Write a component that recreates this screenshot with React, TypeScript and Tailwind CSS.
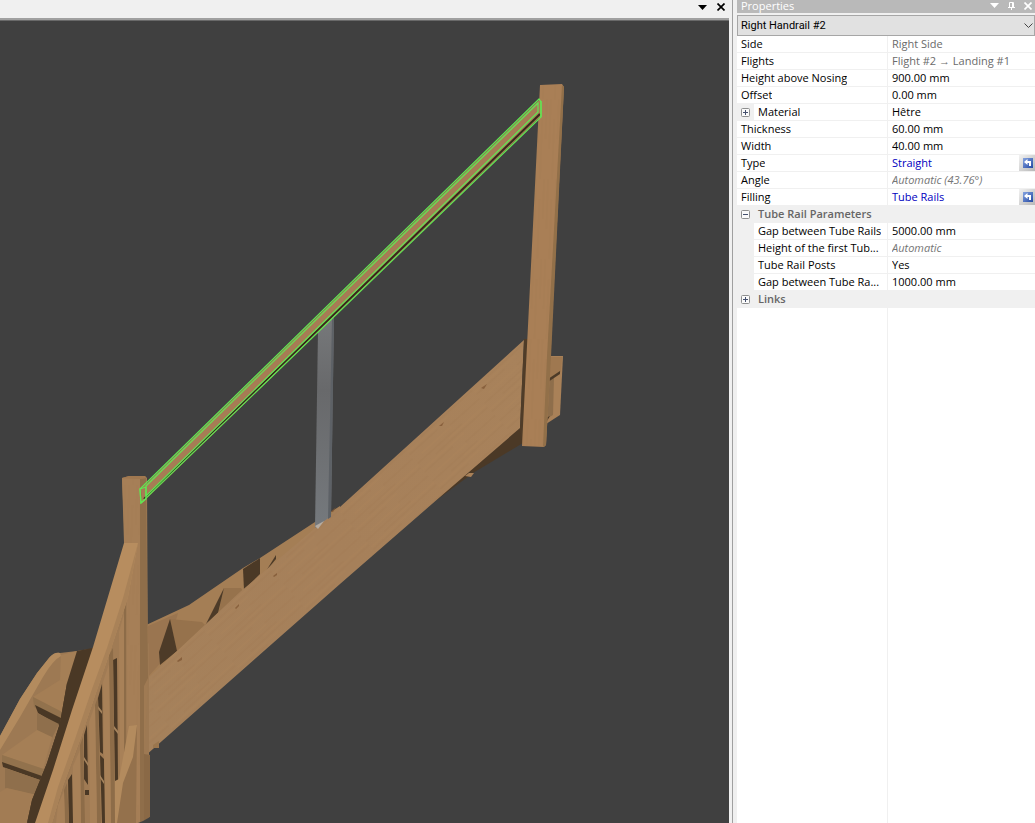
import React, { useState } from 'react';

type Kind = 'input' | 'readonly' | 'auto' | 'link';

interface Property {
  id: string;
  label: string;
  value: string;
  kind: Kind;
  expandable?: boolean;
}

const PROPERTIES: Property[] = [
  { id: 'side', label: 'Side', value: 'Right Side', kind: 'readonly' },
  { id: 'flights', label: 'Flights', value: 'Flight #2 → Landing #1', kind: 'readonly' },
  { id: 'height', label: 'Height above Nosing', value: '900.00 mm', kind: 'input' },
  { id: 'offset', label: 'Offset', value: '0.00 mm', kind: 'input' },
  { id: 'material', label: 'Material', value: 'Hêtre', kind: 'input', expandable: true },
  { id: 'thickness', label: 'Thickness', value: '60.00 mm', kind: 'input' },
  { id: 'width', label: 'Width', value: '40.00 mm', kind: 'input' },
  { id: 'type', label: 'Type', value: 'Straight', kind: 'link' },
  { id: 'angle', label: 'Angle', value: 'Automatic (43.76°)', kind: 'auto' },
  { id: 'filling', label: 'Filling', value: 'Tube Rails', kind: 'link' },
];

const TUBE_PROPERTIES: Property[] = [
  { id: 'tube-gap', label: 'Gap between Tube Rails', value: '5000.00 mm', kind: 'input' },
  { id: 'tube-height', label: 'Height of the first Tub...', value: 'Automatic', kind: 'auto' },
  { id: 'tube-posts', label: 'Tube Rail Posts', value: 'Yes', kind: 'input' },
  { id: 'tube-post-gap', label: 'Gap between Tube Ra...', value: '1000.00 mm', kind: 'input' },
];

const VALUE_STYLES: Record<Kind, string> = {
  input: 'text-black',
  readonly: 'text-[#6a6a6a]',
  auto: 'text-[#757575] italic',
  link: 'text-[#0000c0]',
};

const DownArrow = () => (
  <svg width="9" height="5" viewBox="0 0 9 5" fill="currentColor" aria-hidden="true">
    <path d="M0 0h9L4.500 5z" />
  </svg>
);

const CloseIcon = () => (
  <svg width="8" height="8" viewBox="0 0 8 8" stroke="currentColor" strokeWidth="1.700" aria-hidden="true">
    <path d="M.5.5l7 7M7.500.5l-7 7" />
  </svg>
);

const PinIcon = () => (
  <svg width="7" height="8" viewBox="0 0 7 8" fill="none" stroke="currentColor" aria-hidden="true">
    <path d="M1.500 5V.5h4V5M4.500.5V5M0 5.500h7M3.500 5.500V8" />
  </svg>
);

const ResetIcon = () => (
  <svg width="10" height="10" viewBox="0 0 10 10" aria-hidden="true">
    <defs>
      <linearGradient id="resetFill" x1="0" y1="0" x2="1" y2="1">
        <stop offset="0" stopColor="#86a4e0" />
        <stop offset="1" stopColor="#2449a4" />
      </linearGradient>
    </defs>
    <rect width="10" height="10" fill="url(#resetFill)" />
    <path d="M1 4l3.500-3v2H8v5H6V5H4.500v2z" fill="#fff" />
  </svg>
);

const Expander = ({ open, name, onClick }: { open: boolean; name: string; onClick?: () => void }) => (
  <button
    type="button"
    aria-label={`Toggle ${name}`}
    aria-expanded={open}
    onClick={onClick}
    className="flex items-center justify-center w-[17px] h-4 shrink-0 bg-[#f0f0f0]"
  >
    <svg width="9" height="9" viewBox="0 0 9 9" fill="#fafafa" stroke="#8e8f8f" aria-hidden="true">
      <rect x=".5" y=".5" width="8" height="8" rx="1" />
      <path d={open ? 'M2 4.500h5' : 'M2 4.500h5M4.500 2v5'} stroke="#44506e" />
    </svg>
  </button>
);

const PropertyRow = ({ item, nested }: { item: Property; nested?: boolean }) => {
  const style = VALUE_STYLES[item.kind];
  return (
    <div className="flex h-[17px]">
      {nested && <div className="w-[17px] shrink-0 bg-[#f0f0f0]" />}
      <div className="flex flex-1 min-w-0 border-b border-[#f0f0f0]">
        <div className={`flex shrink-0 border-r border-[#f0f0f0] ${nested ? 'w-[134px]' : 'w-[151px]'}`}>
          {item.expandable && <Expander open={false} name={item.label} />}
          <label htmlFor={item.id} className="pl-1 whitespace-nowrap overflow-hidden leading-4">
            {item.label}
          </label>
        </div>
        {item.kind === 'link' ? (
          <>
            <button id={item.id} type="button" className={`flex-1 pl-1 text-left leading-4 ${style}`}>
              {item.value}
            </button>
            <button
              type="button"
              aria-label={`Reset ${item.label}`}
              className="flex items-center justify-center w-4 h-4 pl-0.5 bg-linear-to-br from-[#f2f2f2] to-[#b8b8b8]"
            >
              <ResetIcon />
            </button>
          </>
        ) : (
          <input
            id={item.id}
            type="text"
            defaultValue={item.value}
            readOnly={item.kind === 'readonly'}
            className={`flex-1 min-w-0 h-4 pl-1 leading-4 bg-transparent outline-none ${style}`}
          />
        )}
      </div>
    </div>
  );
};

const GroupRow = ({ label, open, onClick }: { label: string; open: boolean; onClick: () => void }) => (
  <div className="flex items-start h-[17px] bg-[#f0f0f0] text-[#666666] font-semibold">
    <Expander open={open} name={label} onClick={onClick} />
    <h3 className="pl-1 leading-4">{label}</h3>
  </div>
);

const PropertiesPanel = () => {
  const [tubeOpen, setTubeOpen] = useState(true);
  const [linksOpen, setLinksOpen] = useState(false);

  return (
    <aside className="flex flex-col w-[298px] shrink-0 text-[11px] bg-white">
      <header className="flex items-start justify-between h-[13px] pl-1 bg-[#b9b9b9] text-white">
        <h2 className="leading-3">Properties</h2>
        <div className="flex items-center gap-[9px] h-[11px] pr-[3px]">
          <button type="button" aria-label="Panel menu"><DownArrow /></button>
          <button type="button" aria-label="Pin panel"><PinIcon /></button>
          <button type="button" aria-label="Close panel"><CloseIcon /></button>
        </div>
      </header>
      <div className="relative pt-0.5 bg-[#f0f0f0]">
        <select
          aria-label="Selected element"
          className="block w-full h-[21px] pl-[3px] pt-0.5 appearance-none border border-[#a6a6a6] bg-[#e1e1e1] text-[11px] font-['Roboto','Liberation_Sans',sans-serif] text-black"
        >
          <option>Right Handrail #2</option>
        </select>
        <svg className="absolute right-0.5 top-2.5 pointer-events-none" width="9" height="6" viewBox="0 0 9 6" fill="none" stroke="#444" aria-hidden="true">
          <path d="M.5.5l4 4 4-4" />
        </svg>
      </div>

      <div>
        {PROPERTIES.map(item => (
          <PropertyRow key={item.id} item={item} />
        ))}
        <GroupRow label="Tube Rail Parameters" open={tubeOpen} onClick={() => setTubeOpen(!tubeOpen)} />
        {tubeOpen && TUBE_PROPERTIES.map(item => <PropertyRow key={item.id} item={item} nested />)}
        <GroupRow label="Links" open={linksOpen} onClick={() => setLinksOpen(!linksOpen)} />
      </div>
      <div className="flex-1 w-[151px] border-r border-[#f0f0f0]" />
    </aside>
  );
};

const StairModel = () => (
  <svg
    className="block w-full h-full"
    viewBox="0 21 729 802"
    preserveAspectRatio="xMinYMin slice"
    role="img"
    aria-label="Staircase model"
  >
    <defs>
      <pattern id="grainSlope" width="90" height="23" patternUnits="userSpaceOnUse" patternTransform="rotate(-42)">
        <path d="M0 3h60M20 8h70M0 14h38M50 19h40" stroke="#8c623a" strokeOpacity=".1" />
        <path d="M40 5h50M0 11h55M10 21h40" stroke="#c39768" strokeOpacity=".12" />
      </pattern>
      <pattern id="grainPost" width="12" height="80" patternUnits="userSpaceOnUse" patternTransform="rotate(2)">
        <path d="M2 0v50M6 20v60M10 0v40" stroke="#8c623a" strokeOpacity=".1" />
      </pattern>
      <linearGradient id="beam" x1="0" y1="1" x2="1" y2="0">
        <stop offset="0" stopColor="#a5815b" />
        <stop offset=".5" stopColor="#a6805a" />
        <stop offset="1" stopColor="#a8825b" />
      </linearGradient>
      <linearGradient id="tube" x1="0" y1="0" x2="0" y2="1">
        <stop offset="0" stopColor="#77797b" />
        <stop offset=".35" stopColor="#68696b" />
        <stop offset="1" stopColor="#75797d" />
      </linearGradient>
    </defs>

    {/* landing edge behind the top post */}
    <path d="M549 356h14l-3 59-14 9z" fill="#a98158" />
    <path d="M550 357h12l-1 15-12 8z" fill="#9f7850" />
    <path d="M549 381l5-4-1 38-7 4z" fill="#8e6e4b" />
    <path d="M548 379l12-8v3l-12 8z" fill="#4d3b28" />
    <path d="M546 418l4-2-3 5z" fill="#4d3b28" />

    {/* far stringer and treads of the upper flight */}
    <path d="M144 626l45-21 54-37 17-10 55-36 25-16v60L146 720z" fill="#a47e55" />
    <path d="M148 626l30-13-13 45-18 20z" fill="#9a7550" />
    <path d="M170 619l32 3 5 5-30 26z" fill="#96724c" />
    <path d="M170 619l7 32-17 14-1-13z" fill="#4d3b28" />
    <path d="M224 588h17l3 5-26 22z" fill="#96724c" />
    <path d="M224 588l-6 25-13 13z" fill="#4d3b28" />
    <path d="M243 569l17-11v16l-16 16z" fill="#4b3926" />
    <path d="M276 555v4l-10 12z" fill="#4d3b28" />

    {/* near stringer */}
    <path d="M434 502l39-29 50-30v-20z" fill="#4b3926" />
    <path d="M465 476l4-3h5l-3 4z" fill="#a98158" />
    <path d="M144 682l33-31 63-59 100-85 184-167-4 88-80 69-100 87-195 172z" fill="url(#beam)" />
    <path d="M144 682l33-31 63-59 100-85 184-167-4 88-80 69-100 87-195 172z" fill="url(#grainSlope)" />
    <g fill="#7c5330" fillOpacity=".7">
      <path d="M145 690l3-3 1 2-3 3zM177 661l5-4v3l-4 2zM235 608l4-4v2l-3 3zM273 576l4-3v2l-3 2zM330 512l6-5-3 5zM439 426l5-4-2 4zM481 388l6-4-3 5z" />
    </g>
    <path d="M524 339h4l-5 107-3-18z" fill="#4f3c28" />
    <path d="M153 745l6-4v7h-6z" fill="#9a764e" />

    {/* tube post under the handrail */}
    <path d="M318 330l16-14-3 200-16 12z" fill="url(#tube)" />
    <path d="M332 318l2-1-3 200-3 2z" fill="#5d6166" />
    <path d="M315 526l9-5-6 8z" fill="#b5aca2" />

    {/* top post */}
    <path d="M540 85l22-1 2 3-12 235-2 50-4 73-2 2-22-1z" fill="#a97f56" />
    <path d="M540 85l22-1 2 3-12 235-2 50-4 73-2 2-22-1z" fill="url(#grainPost)" />
    <path d="M562 85l2 2-13 270-5 88-3 2 4-91z" fill="#927049" />

    {/* winder treads */}
    <path d="M0 736l20-37 17-26 12-15q5-6 11-5l17-2 20-3 30-44 22 40v179H0z" fill="#9d7953" />
    <path d="M0 736l20-37 17-26 12-15q5-6 11-5l1 3q-8 4-18 21L20 717 0 750z" fill="#b38b5e" />
    <path d="M61 655l16-4-9 32-8-3z" fill="#a57f56" />
    <path d="M33 697l27-17 8 1-6 31z" fill="#a47e55" />
    <path d="M33 697l29 15-1 10-27-15z" fill="#92724d" />
    <path d="M35 705l26 13-1 8-22-13z" fill="#4a3825" />
    <path d="M37 713l22 11-7 14-15-8z" fill="#8f6f4c" />
    <path d="M2 755l35-25 15 7-9 33z" fill="#a57f56" />
    <path d="M2 755l42 14-1 9-41-15z" fill="#92724d" />
    <path d="M2 762l40 14-2 4-37-13z" fill="#4a3825" />
    <path d="M5 768l35 12-4 15-31-7z" fill="#8f6f4c" />
    <path d="M0 792l7-4 30 7-7 28H0z" fill="#a27c54" />
    <path d="M77 651l20-4-14 46-16 60-40 70 5-23 15-37 13-40 7-40z" fill="#4a3825" />
    <path d="M67 683l-7 40-13 40-15 37-5 23h12l30-100 14-40z" fill="#4a3825" />

    {/* balusters with the shadowed gaps between them */}
    <path d="M126 596l-15 52-15 45-20 60-24 70h66l22-98V600z" fill="#a07b54" />
    <path d="M113 660l4-2 1 122-3 2zM98 698l4-14 1 70-3-2zM100 755l4 4 2 64h-4zM84 735l3-10 1 60-4-6zM85 790h4v5h-4zM68 780l4-6 1 49h-4z" fill="#4a3825" />
    <path d="M98 706l4 5v3l-4-5zM114 726l4 5v3l-4-5zM84 757l4 6v3l-4-6zM100 775l4 6v3l-4-6z" fill="#a5835c" />
    <path d="M109 655l4-7 2 175h-4zM124 610l3-8 1 170-4 20zM95 705l3-8 3 126h-4zM80 745l3-8 2 86h-4zM64 790l3-7 2 40h-4z" fill="#8d6c48" />
    <path d="M103 682l6-18 2 159h-6zM119 632l5-18v170h-4zM89 722l6-17 2 118h-7zM73 766l7-16 1 73h-8zM58 805l6-14 1 32h-9z" fill="#a88158" />

    {/* newel post */}
    <path d="M122 478l7-2h16l2 2 1 206-4 70 6 1v62l-7 4h-11l-6-60V570z" fill="#9f7a53" />
    <path d="M122 478l18 1v344h-4l-9-60V560l-3-17z" fill="#a67f57" />
    <path d="M122 478l18 1v344h-4l-9-60V560l-3-17z" fill="url(#grainPost)" />
    <path d="M140 479l6-1 2 200-4 8v137h-4z" fill="#8f6e4a" />
    <path d="M122 478l7-2h16l1 2-6 1z" fill="#a07850" />
    <path d="M144 754l6 1v62l-6 4z" fill="#8a6946" />
    <path d="M138 823l5-2 7-4v6z" fill="#404040" />

    {/* lower stringer */}
    <path d="M137 725l-1 98h-21l4-40z" fill="#94714c" />
    <path d="M129 726l8-1-4 32-10 26-6 40h-2v-42l4-2z" fill="#b38b5e" />

    {/* curved handrail of the lower flight */}
    <path d="M124 543h14l-10 54-17 52-14 41-17 50-17 46-11 37H35l18-53 19-60 21-63 20-67z" fill="#b78d5f" />
    <path d="M138 543l-10 54-17 52-14 41-17 50-17 46-11 37h-4l10-36 17-48 17-50 15-41 16-50z" fill="#a98258" />

    {/* selected handrail */}
    <path d="M141 489L540 99v18L142 503z" fill="#a67c54" />
    <path d="M144 499L540 114" stroke="#35291b" strokeWidth="2" />
    <g fill="none" stroke="#62e653" strokeWidth="1.200">
      <path d="M140 489L539 99l2 3v15L141 503z" />
      <path d="M146 486L538 103v9L146 496z" />
      <path d="M140 489l6-2v12l-5 4zM541 101v16" />
    </g>
  </svg>
);

const App: React.FC = () => {
  return (
    <div className="flex h-screen overflow-hidden bg-[#f0f0f0] font-['Open_Sans','Noto_Sans',sans-serif]">
      <main className="flex flex-col flex-1 min-w-0 mr-1 border-r border-[#a0a0a0]">
        <div className="flex items-center justify-end gap-2.5 h-[18px] pr-[7px] pb-1 text-black">
          <button type="button" aria-label="View menu"><DownArrow /></button>
          <button type="button" aria-label="Close view"><CloseIcon /></button>
        </div>
        <div className="flex-1 min-h-0 mr-[3px] border-t-2 border-[#a0a0a0]">
          <div className="h-full border-t border-[#696969] bg-[#404040]">
            <StairModel />
          </div>
        </div>
      </main>
      <PropertiesPanel />
    </div>
  );
};

export default App;
